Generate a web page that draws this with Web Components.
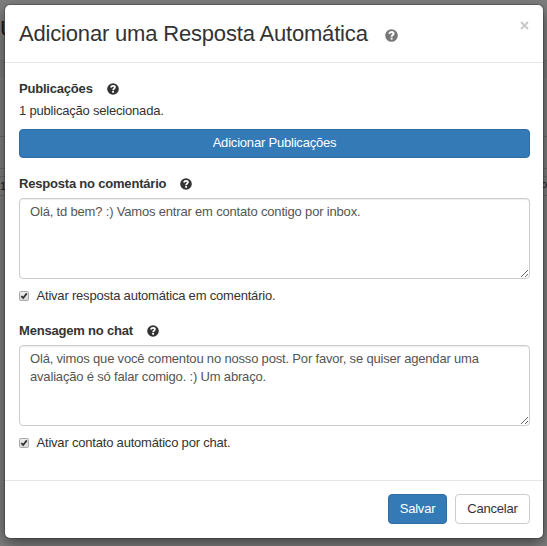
<!DOCTYPE html>
<html lang="pt-BR">
<head>
<meta charset="utf-8">
<title>Resposta Automática</title>
<style>
  body {
    margin: 0;
    height: 546px;
    overflow: hidden;
    background: #7f7f7f;
    color: #333;
    font: 13px/18px Arial, "Liberation Sans", sans-serif;
    letter-spacing: -0.2px;
  }
  .count { margin-top: -1px; }
</style>
</head>
<body>
<page-backdrop>
  <modal-dialog>
    <span slot="title">Adicionar uma Resposta Automática</span>
    <help-icon slot="title" muted></help-icon>
    <field-group label="Publicações">
      <div class="count">1 publicação selecionada.</div>
      <x-button kind="primary" block>Adicionar Publicações</x-button>
    </field-group>
    <field-group label="Resposta no comentário">
      <text-box>Olá, td bem? :) Vamos entrar em contato contigo por inbox.</text-box>
      <check-box>Ativar resposta automática em comentário.</check-box>
    </field-group>
    <field-group label="Mensagem no chat">
      <text-box>Olá, vimos que você comentou no nosso post. Por favor, se quiser agendar uma avaliação é só falar comigo. :) Um abraço.</text-box>
      <check-box>Ativar contato automático por chat.</check-box>
    </field-group>
    <x-button slot="footer" kind="primary" style="width: 59px">Salvar</x-button>
    <x-button slot="footer" style="width: 75px">Cancelar</x-button>
  </modal-dialog>
</page-backdrop>

<script>
const define = (name, html, setup) =>
  customElements.define(
    name,
    class extends HTMLElement {
      constructor() {
        super();
        this.attachShadow({ mode: "open" }).innerHTML = html;
      }
      connectedCallback() {
        if (setup) setup(this, this.shadowRoot);
      }
    }
  );

define(
  "page-backdrop",
  `
  <style>
  :host { display: block; position: relative; box-sizing: border-box; height: 546px; padding: 5px 4px 8px 5px; }
  .page { position: absolute; inset: 0; overflow: hidden; color: #191919; }
  .page > * { position: absolute; }
  .band { left: 0; right: 0; top: 60px; height: 18px; background: #7a7a7a; border-top: 1px solid #737373; box-sizing: border-box; }
  .line { left: 0; right: 0; height: 1px; background: #6c6c6c; }
  ::slotted(*) { position: relative; }
  </style>
  <div class="page">
    <div class="band"></div>
    <div class="line" style="top: 136px"></div>
    <div class="line" style="top: 168px"></div>
    <div class="line" style="top: 176px"></div>
    <div class="line" style="top: 195px"></div>
    <span style="left: 0; top: 17px; font: 22px/24px 'Liberation Sans', sans-serif">U</span>
    <span style="left: 0; top: 177px; font-size: 11px">1a</span>
    <span style="right: 0; top: 175px; font-size: 11px">so</span>
  </div>
  <slot></slot>
`
);

define(
  "modal-dialog",
  `
  <style>
  :host {
    display: flex; flex-direction: column; height: 533px; background: #fff;
    border-radius: 5px; box-shadow: 0 0 0 1px rgba(0, 0, 0, .2), 0 5px 15px rgba(0, 0, 0, .5);
  }
  header { display: flex; box-sizing: border-box; height: 58px; padding: 14px 14px 0 14px; border-bottom: 1px solid #e5e5e5; }
  h4 { display: flex; flex: 1; gap: 17px; margin: 0; font: 22px/30px Arial, "Liberation Sans", sans-serif; letter-spacing: -.18px; }
  .close { width: 9px; height: 9px; margin-top: 2px; }
  main { flex: 1; display: flex; flex-direction: column; gap: 17px; padding: 17px 13px 0 14px; }
  footer { display: flex; justify-content: flex-end; gap: 8px; box-sizing: border-box; height: 58px; padding: 13px 13px 0; border-top: 1px solid #e5e5e5; }
  </style>
  <header>
    <h4><slot name="title"></slot></h4>
    <svg class="close" viewBox="0 0 9 9"><path d="M1 1l7 7M8 1l-7 7" stroke="#c8c8c8" stroke-width="1.9"/></svg>
  </header>
  <main><slot></slot></main>
  <footer><slot name="footer"></slot></footer>
`
);

define(
  "help-icon",
  `
  <style>
  :host { display: block; width: 12px; height: 12px; color: #333; }
  :host([muted]) { width: 13px; height: 13px; margin-top: 10px; color: #777; }
  svg { display: block; width: 100%; height: 100%; }
  </style>
  <svg viewBox="0 0 12 12">
    <circle cx="6" cy="6" r="5.8" fill="currentColor"/>
    <path d="M3.9 4.5C4.2 3.2 5 2.8 6.1 2.8c1.1 0 1.8.6 1.8 1.5 0 1.3-1.8 1.3-1.8 2.9" fill="none" stroke="#fff" stroke-width="1.8"/>
    <path d="M5.2 8h1.8v1.7H5.2z" fill="#fff"/>
  </svg>
`
);

define(
  "field-group",
  `
  <style>
  :host { display: flex; flex-direction: column; }
  .label { display: flex; align-items: center; gap: 14px; height: 18px; margin-bottom: 5px; font-weight: bold; }
  </style>
  <div class="label"><span></span><help-icon></help-icon></div>
  <slot></slot>
`,
  (el, root) => {
    root.querySelector("span").textContent = el.getAttribute("label");
  }
);

define(
  "x-button",
  `
  <style>
  :host {
    display: block; box-sizing: border-box; height: 30px; padding: 5px 0; text-align: center;
    background: #fff; border: 1px solid #ccc; border-radius: 4px;
  }
  :host([kind="primary"]) { background: #337ab7; border-color: #2e6da4; color: #fff; }
  :host([block]) { height: 29px; margin-top: 9px; padding-top: 4px; }
  </style>
  <slot></slot>
`
);

define(
  "text-box",
  `
  <style>
  :host { display: block; height: 81px; }
  textarea {
    display: block; box-sizing: border-box; width: 100%; height: 81px; margin: 0; padding: 4px 10px;
    border: 1px solid #ccc; border-radius: 4px; box-shadow: inset 0 1px 1px rgba(0, 0, 0, .075);
    background: #fff; color: #555; font: inherit; letter-spacing: -.18px; overflow: auto;
  }
  </style>
  <textarea></textarea>
`,
  (el, root) => {
    root.querySelector("textarea").textContent = el.textContent;
  }
);

define(
  "check-box",
  `
  <style>
  :host { display: flex; align-items: center; gap: 7.5px; height: 18px; margin-top: 8px; }
  svg { width: 10px; height: 10px; }
  </style>
  <svg viewBox="0 0 10 10">
    <defs><linearGradient id="g" x2="0" y2="1"><stop stop-color="#eee"/><stop offset="1" stop-color="#d8d8d8"/></linearGradient></defs>
    <rect x=".5" y=".5" width="9" height="9" rx="1.2" fill="url(#g)" stroke="#aaa"/>
    <path d="M2.3 5.1l1.9 1.9L7.8 2.4" fill="none" stroke="#333" stroke-width="1.8"/>
  </svg>
  <span><slot></slot></span>
`
);
</script>
</body>
</html>
